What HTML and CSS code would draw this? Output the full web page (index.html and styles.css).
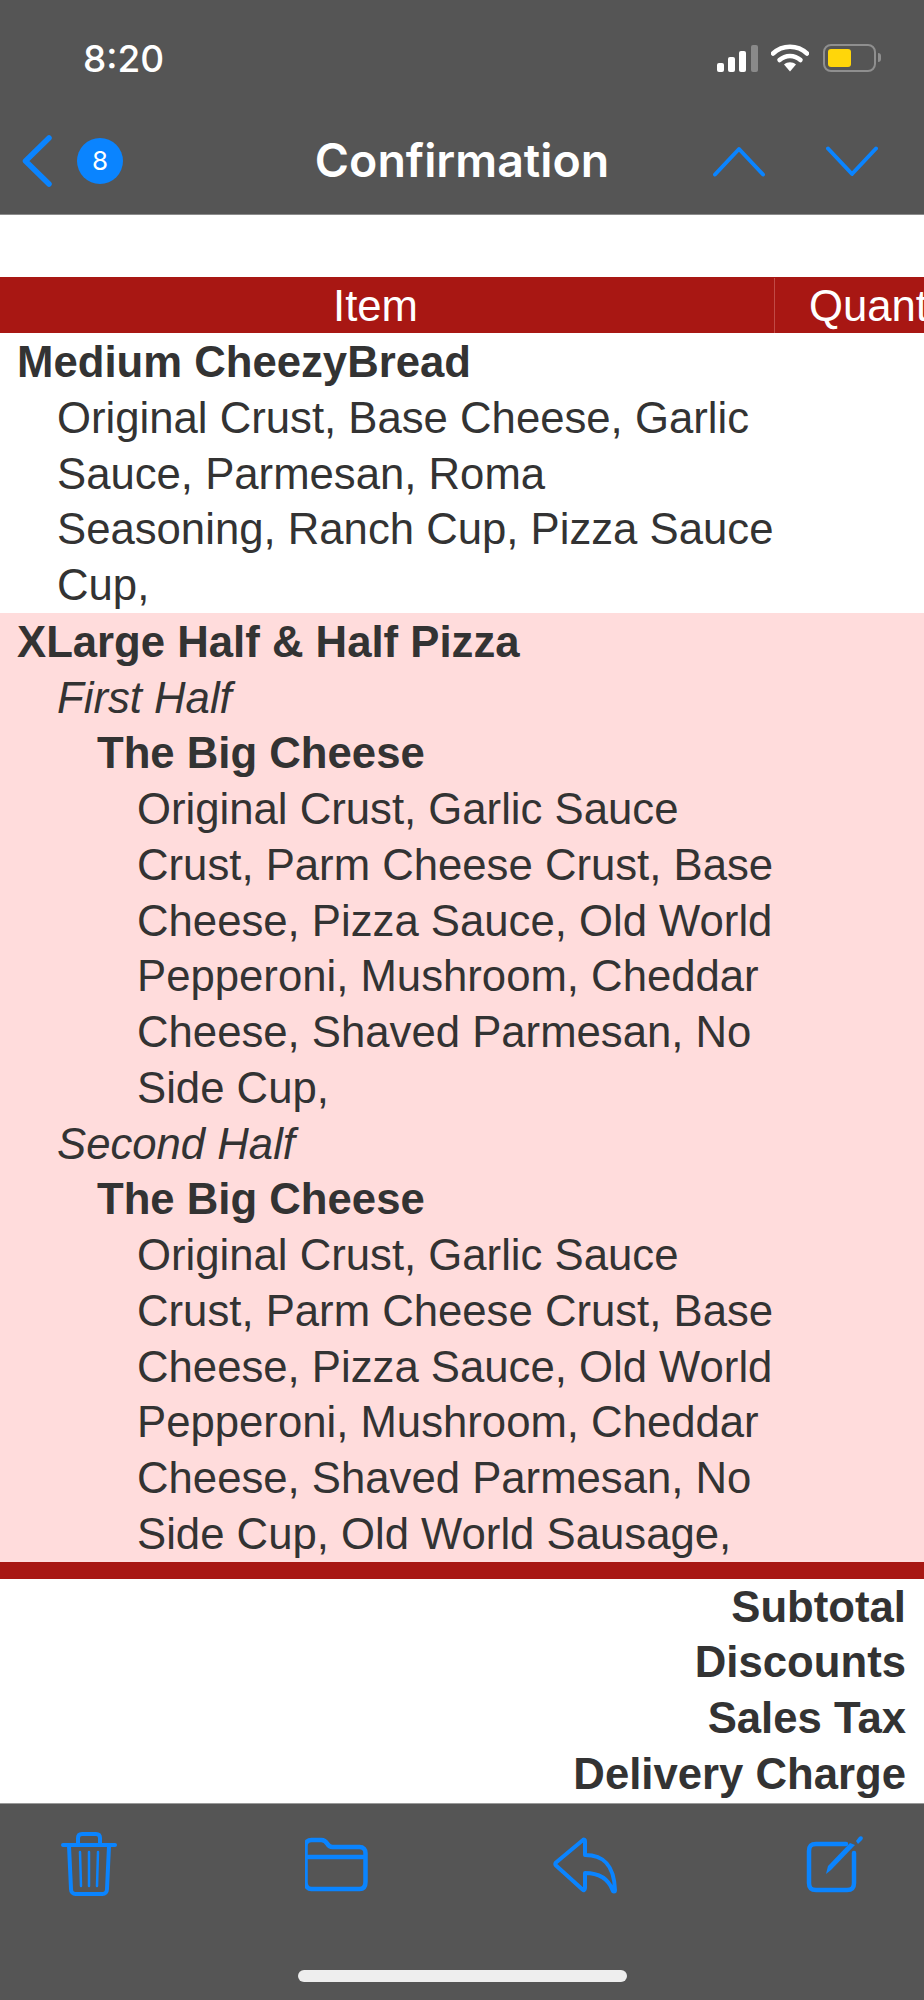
FILE: index.html
```html
<!DOCTYPE html>
<html lang="en">

<head>
    <meta charset="UTF-8">
    <meta name="viewport" content="width=device-width, initial-scale=1.0">
    <title>Confirmation</title>
    <link rel="stylesheet" href="styles.css">
</head>

<body>
    <header class="top">
        <div class="status">
            <span class="time">8:20</span>
            <div class="status-icons">
                <svg class="signal" width="41" height="27" viewBox="0 0 41 27">
                    <rect x="0" y="18" width="7" height="9" rx="2" fill="#fff" />
                    <rect x="11" y="12" width="7" height="15" rx="2" fill="#fff" />
                    <rect x="22" y="6" width="7" height="21" rx="2" fill="#fff" />
                    <rect x="34" y="0" width="7" height="27" rx="2" fill="#8a8a8a" />
                </svg>
                <svg class="wifi" width="38" height="29" viewBox="0 0 38 29">
                    <path d="M2 10.5C11.500 1.500 26.500 1.500 36 10.500" fill="none" stroke="#fff" stroke-width="4.500" stroke-linecap="round" />
                    <path d="M8.500 17C14.500 11.500 23.500 11.500 29.500 17" fill="none" stroke="#fff" stroke-width="4.500" stroke-linecap="round" />
                    <path d="M13 21.500C16.500 18.500 21.500 18.500 25 21.500L19 28.500Z" fill="#fff" />
                </svg>
                <div class="battery">
                    <div class="battery-level"></div>
                </div>
                <div class="battery-nub"></div>
            </div>
        </div>
        <nav class="nav">
            <div class="nav-left">
                <svg width="30" height="52" viewBox="0 0 30 52">
                    <path d="M27 3L3.500 26L27 49" fill="none" stroke="#0a84ff" stroke-width="5.500" stroke-linecap="round" stroke-linejoin="round" />
                </svg>
                <span class="badge">8</span>
            </div>
            <h1 class="title">Confirmation</h1>
            <div class="nav-right">
                <svg width="52" height="31" viewBox="0 0 52 31">
                    <path d="M2 28.500L26 3L50 28.500" fill="none" stroke="#0a84ff" stroke-width="4" stroke-linecap="round" stroke-linejoin="round" />
                </svg>
                <svg width="52" height="31" viewBox="0 0 52 31">
                    <path d="M2 2.500L26 28L50 2.500" fill="none" stroke="#0a84ff" stroke-width="4" stroke-linecap="round" stroke-linejoin="round" />
                </svg>
            </div>
        </nav>
    </header>

    <main class="content">
        <div class="table-head">
            <div class="head-item">Item</div>
            <div class="head-quant">Quantity</div>
        </div>

        <section class="row">
            <div class="name">Medium CheezyBread</div>
            <div class="lvl-1">Original Crust, Base Cheese, Garlic Sauce, Parmesan, Roma<br>Seasoning, Ranch Cup, Pizza Sauce Cup,</div>
        </section>

        <section class="row pink">
            <div class="name">XLarge Half &amp; Half Pizza</div>
            <div class="lvl-1 half">First Half</div>
            <div class="lvl-2 name">The Big Cheese</div>
            <div class="lvl-3">Original Crust, Garlic Sauce Crust, Parm Cheese Crust, Base Cheese, Pizza Sauce, Old World Pepperoni, Mushroom, Cheddar Cheese, Shaved Parmesan, No Side Cup,</div>
            <div class="lvl-1 half">Second Half</div>
            <div class="lvl-2 name">The Big Cheese</div>
            <div class="lvl-3">Original Crust, Garlic Sauce Crust, Parm Cheese Crust, Base Cheese, Pizza Sauce, Old World Pepperoni, Mushroom, Cheddar Cheese, Shaved Parmesan, No Side Cup, Old World Sausage,</div>
        </section>

        <div class="divider"></div>

        <section class="totals">
            <div>Subtotal</div>
            <div>Discounts</div>
            <div>Sales Tax</div>
            <div>Delivery Charge</div>
        </section>
    </main>

    <footer class="toolbar">
        <div class="tools">
            <svg width="66" height="66" viewBox="0 0 66 66">
                <g fill="none" stroke="#0a84ff" stroke-linecap="round" stroke-linejoin="round">
                    <path d="M7 13H59" stroke-width="4" />
                    <path d="M22 12V6C22 3.500 23.500 2 26 2H40C42.500 2 44 3.500 44 6V12" stroke-width="4" />
                    <path d="M13 14L15 57C15 60 17 62 19.500 62H46.500C49 62 51 60 51 57L53 14" stroke-width="4" />
                    <path d="M24 20L25 54M33 20V54M42 20L41 54" stroke-width="2.500" />
                </g>
            </svg>
            <svg width="66" height="66" viewBox="2.500 0 66 66">
                <path d="M3 20V14C3 10 5.500 8 9 8H19C22 8 23 9 25 12C26.500 14.500 27.500 15 30 15H57C61 15 63 17.500 63 21V50C63 54.500 61 57 57 57H9C5.500 57 3 54.500 3 50ZM3 25H63" fill="none" stroke="#0a84ff" stroke-width="4.500" stroke-linejoin="round" />
            </svg>
            <svg width="66" height="66" viewBox="1 1 66 66">
                <path d="M31 9C32 8 33 9 33 10V24C50 24 62 32 63 59C63 61 61 61 60.500 59C56 47 47 42 33 42V57C33 59 31.500 60 30.500 58.500L4 34.500C3 33.500 3 32.500 4 31.500Z" fill="none" stroke="#0a84ff" stroke-width="4" stroke-linejoin="round" />
            </svg>
            <svg width="66" height="66" viewBox="0 0 66 66">
                <path d="M44 12H14C9 12 7 14 7 19V51C7 56 9 58 14 58H45C50 58 52 56 52 51V21" fill="none" stroke="#0a84ff" stroke-width="4.500" stroke-linecap="round" />
                <path d="M24 42L26 34L48 11L53 13L29 38Z" fill="#0a84ff" />
                <path d="M54 9L57 5C58 4 60 4 60.500 5C61 6 61 7 60 8L56 12Z" fill="#0a84ff" />
            </svg>
        </div>
        <div class="home-bar"></div>
    </footer>
</body>

</html>
```
FILE: styles.css
```css
* {
    box-sizing: border-box;
}

body {
    margin: 0;
    width: 924px;
    height: 2000px;
    overflow: hidden;
    display: flex;
    flex-direction: column;
    background: #fff;
    font-family: "Liberation Sans", Arial, sans-serif;
    color: #333;
}

/* top bar */
.top {
    height: 215px;
    background: #555;
    border-bottom: 1px solid #8c8c8c;
    color: #fff;
    font-family: Inter, "Liberation Sans", sans-serif;
}

.status {
    height: 116px;
    padding: 44px 43px 0 83px;
    display: flex;
    justify-content: space-between;
}

.time {
    font-size: 37px;
    font-weight: 500;
    line-height: 30px;
}

.status-icons {
    display: flex;
    align-items: flex-start;
}

.signal {
    margin: 1px 13px 0 0;
}

.wifi {
    margin: -1px 14px 0 0;
}

.battery {
    width: 53px;
    height: 28px;
    padding: 3px;
    border: 2px solid #8f8f8f;
    border-radius: 8px;
}

.battery-level {
    width: 23px;
    height: 18px;
    background: #ffd60a;
    border-radius: 3px;
}

.battery-nub {
    width: 3px;
    height: 9px;
    margin: 9px 0 0 2px;
    background: #8f8f8f;
    border-radius: 0 3px 3px 0;
}

.nav {
    display: grid;
    grid-template-columns: 1fr auto 1fr;
    align-items: center;
    height: 98px;
    padding: 0 46px 8px 22px;
}

.nav-left {
    display: flex;
    align-items: center;
    gap: 25px;
}

.nav-right {
    display: flex;
    justify-content: flex-end;
    gap: 61px;
}

.badge {
    width: 46px;
    height: 46px;
    border-radius: 50%;
    background: #0a84ff;
    color: #fff;
    font-size: 26px;
    line-height: 46px;
    text-align: center;
}

.title {
    margin: 0 0 2px 24px;
    font-size: 46.500px;
    font-weight: 600;
    line-height: 56px;
}

/* table */
.content {
    flex: 1;
    padding-top: 62px;
    overflow: hidden;
    font-size: 43.700px;
    line-height: 55.750px;
}

.table-head {
    display: flex;
    height: 56px;
    padding-top: 1px;
    background: #a81713;
    color: #fff;
    white-space: nowrap;
    overflow: hidden;
}

.head-item {
    flex: 0 0 775px;
    padding-right: 23px;
    text-align: center;
    border-right: 1px solid #c04a46;
}

.head-quant {
    padding-left: 34px;
}

.row {
    padding: 1px 141px 0 17px;
}

.pink {
    background: #ffdcdc;
}

.name {
    font-weight: bold;
}

.half {
    font-style: italic;
}

.lvl-1 {
    padding-left: 40px;
}

.lvl-2 {
    padding-left: 80px;
}

.lvl-3 {
    padding-left: 120px;
}

.divider {
    height: 17px;
    background: #a81713;
}

.totals {
    padding: 0 18px 0 0;
    text-align: right;
    font-weight: bold;
}

/* bottom bar */
.toolbar {
    height: 197px;
    background: #555;
    border-top: 1px solid #999;
}

.tools {
    display: flex;
    justify-content: space-between;
    padding: 28px 56px 0;
}

.home-bar {
    width: 329px;
    height: 12px;
    margin: 72px auto 0;
    background: #eee;
    border-radius: 6px;
}
```
